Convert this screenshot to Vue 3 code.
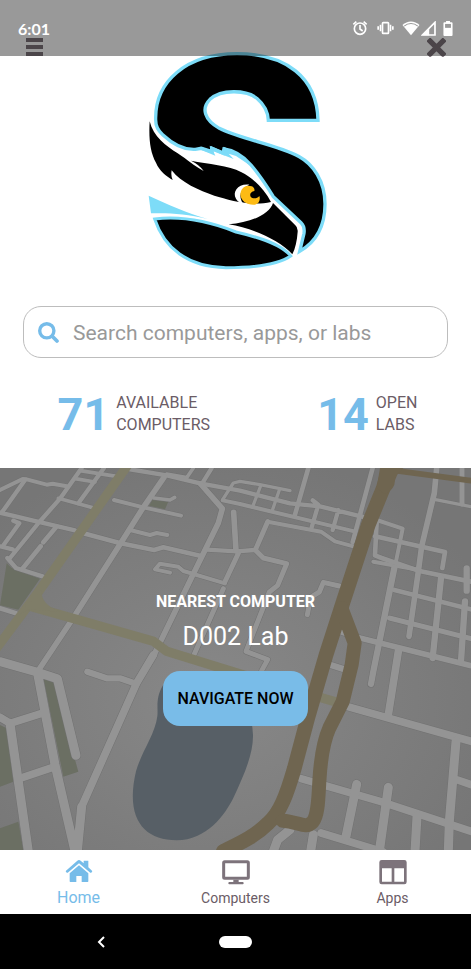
<script setup>
import { ref } from 'vue'

const query = ref('')

const stats = [
  { value: 71, label: ['Available', 'Computers'] },
  { value: 14, label: ['Open', 'Labs'] },
]

const nearest = { name: 'D002 Lab' }

// street centre lines, grouped by stroke width
const roads = [
  { w: 10, d: 'M668 95L700 45L720 40L780 50L870 68M1303 94L1413 116M783 51L758 116M838 66L818 124' },
  { w: 11, d: 'M225 32L285 42M240 8L350 25M175 91L285 121M462 90L510 96L524 88M500 18L560 29L580 0' },
  { w: 12, d: 'M0 66L68 33L80 34L140 50L158 47L200 55M342 96L430 118L543 143M390 186L450 201L470 195L502 201M668 97L720 108L1063 190M803 161L963 191L1005 220L1063 236M1130 156L1208 182L1188 280M1120 281L1255 305M510 314L465 304L480 287L535 296L550 309L675 346' },
  { w: 13, d: 'M75 36L8 130M0 134L50 146L100 158L225 187M245 0L180 92L118 162L30 270M312 0L235 106M40 158L58 166L8 235M0 235L38 244M22 270L48 300L130 326M390 4L500 22L600 46L720 68L870 106L960 115L1095 148M635 0L608 44M620 245L710 250L763 246M938 97L955 110L935 178M1015 126L998 186' },
  { w: 14, d: 'M250 196L362 226L462 246L490 238L600 263M168 178L130 223M122 235L66 304M0 421L48 436M925 0L885 140M1118 0L1058 222M1130 162L1125 262L1145 270L1255 308L1413 341M1125 205L1335 252L1327 300M1183 366L1413 424' },
  { w: 15, d: 'M715 256L675 341M670 362L580 565M803 161L766 246L790 270L860 287L833 352L808 372L738 550L803 575L785 608M1018 354L970 343L958 372L932 388L922 440M1386 0V108M1168 450L1413 512' },
  { w: 17, d: 'M492 28L430 118L362 226L222 446L112 612M701 133L708 248M1310 0L1303 75L1265 235L1255 310L1227 505M1018 490L1080 510L1413 593M602 48L667 122L655 165L578 322L460 565' },
  { w: 19, d: 'M1400 301V368M1395 400L1383 580M1183 300L1120 610L1113 648M1323 330L1298 570M990 590L1030 603M262 611L320 631L360 631L410 648' },
  { w: 23, d: 'M1195 550L1165 740M1043 716L1413 820M1373 936L1413 950M903 932L1143 1001L1413 1090M963 1095L1150 1152M0 748L30 766L125 736M60 931L165 896M460 561L410 645L245 1016' },
  { w: 27, d: 'M1368 820L1348 1060L1345 1150M1070 949L1038 1105M1165 958L1138 1150M1251 1045L1245 1150M940 1100L932 1150M870 1085L833 1115L820 1150M0 581L110 612L172 632L228 862M112 612L165 890L225 1150M30 766L85 1150M245 1016L232 1150' },
]

const tabs = [
  { id: 'home', label: 'Home' },
  { id: 'computers', label: 'Computers' },
  { id: 'apps', label: 'Apps' },
]
const active = ref('home')
</script>

<template>
  <div class="app">
    <div class="status">
      <span class="status__time">6:01</span>
      <div class="status__icons">
        <svg class="status__alarm" viewBox="0 0 48 48" fill="none" stroke="#fff" stroke-width="5">
          <circle cx="24" cy="26" r="17" />
          <path d="M24 15V27L32 33M4 13L13 5M35 5L44 13" />
        </svg>
        <svg class="status__vibrate" viewBox="0 0 48 48" fill="none" stroke="#fff" stroke-width="5">
          <rect x="15" y="8" width="18" height="32" rx="2" />
          <path d="M9 14V34M2 19V29M39 14V34M46 19V29" />
        </svg>
        <svg class="status__wifi" viewBox="0 0 50 44">
          <path d="M25 42L0 12C14 -2 36 -2 50 12Z" fill="#fff" />
          <path d="M5 15C17 5 33 5 45 15" fill="none" stroke="#999" stroke-width="3" />
        </svg>
        <svg class="status__signal" viewBox="0 0 44 44">
          <path d="M4 41H41V4Z" fill="none" stroke="#fff" stroke-width="5" />
          <path d="M3 42H24V22Z" fill="#fff" />
        </svg>
        <svg class="status__battery" viewBox="0 0 28 46">
          <path d="M8 0H20V4H25Q28 4 28 7V43Q28 46 25 46H3Q0 46 0 43V7Q0 4 3 4H8Z" fill="#fff" />
          <rect x="5" y="9" width="18" height="12" fill="#999" />
        </svg>
      </div>
    </div>

    <header class="header">
      <button class="icon-button" aria-label="Menu">
        <svg class="icon-button__menu" viewBox="0 0 19 19">
          <path d="M1 2H18M1 9H18M1 16H18" stroke="#7d737b" stroke-width="4" />
        </svg>
      </button>
      <svg class="logo" viewBox="0 0 600 696">
        <path
          d="M397 241H546C543 112 450 41 303 41C150 41 56 125 59 240C59 258 66 272 80 284C108 310 145 330 178 328L196 325L228 335L227 325L262 340L264 327C300 332 325 352 345 375C375 410 395 442 412 470L495 548Q507 560 504 580L491 634C545 603 567 555 567 492C567 422 530 372 490 350C420 312 320 300 250 265C205 240 195 205 222 178C255 148 330 148 364 176C385 194 396 215 397 241Z"
          fill="#000"
          stroke="#7ddcf8"
          stroke-width="10"
        />
        <path d="M193 320L225 331L225 318L258 332L263 320L302 338L345 378L300 348L278 341L293 357L232 334L238 347L196 330Z" fill="#7ddcf8" />
        <path
          d="M41 244C38 295 42 335 60 368C70 392 90 408 110 420Q104 406 107 391C135 428 190 452 235 467C280 480 345 500 405 486C385 448 350 412 315 396C280 376 215 372 165 362Q190 374 203 393C175 378 155 360 125 340C90 318 52 290 41 244Z"
          fill="#000"
        />
        <path
          d="M278 553C340 548 400 525 411 489L478 556Q486 562 485 575C483 603 478 625 469 643C430 600 350 565 278 553Z"
          fill="#000"
        />
        <path d="M340 434C306 430 288 456 300 476Q306 487 322 492C306 470 312 446 340 434Z" fill="#fff" />
        <path
          d="M347 439C328 432 313 446 313 465C316 485 335 496 357 494C369 491 374 478 370 468C364 476 350 478 344 470C340 462 345 455 355 453C357 447 353 441 347 439Z"
          fill="#fdbb14"
        />
        <path d="M38 467C95 493 155 520 215 537C150 521 95 518 45 520Z" fill="#7ddcf8" />
        <path
          d="M56 537C130 528 210 540 300 576C370 592 435 612 464 648C425 675 340 683 270 683C155 681 85 625 56 537Z"
          fill="#000"
          stroke="#7ddcf8"
          stroke-width="9"
        />
      </svg>
      <button class="icon-button" aria-label="Close">
        <svg class="icon-button__close" viewBox="0 0 18 18">
          <path d="M3 3L15 15M15 3L3 15" stroke="#7d737b" stroke-width="5" stroke-linecap="square" />
        </svg>
      </button>
    </header>

    <label class="search">
      <svg class="search__icon" viewBox="0 0 62 62" fill="none" stroke="#76bce9">
        <circle cx="26" cy="26" r="21" stroke-width="10" />
        <path d="M42 42L56 56" stroke-width="11" stroke-linecap="round" />
      </svg>
      <input
        v-model="query"
        class="search__input"
        type="text"
        placeholder="Search computers, apps, or labs"
        aria-label="Search computers, apps, or labs"
      />
    </label>

    <div class="stats">
      <div v-for="stat in stats" :key="stat.value" class="stat">
        <span class="stat__value">{{ stat.value }}</span>
        <span class="stat__label">
          <span v-for="line in stat.label" :key="line">{{ line }}</span>
        </span>
      </div>
    </div>

    <section class="nearest">
      <svg class="map" viewBox="0 0 1413 1146" preserveAspectRatio="xMidYMid slice">
        <defs>
          <radialGradient id="ground" cx="45%" cy="60%" r="65%">
            <stop offset="0" stop-color="#888" />
            <stop offset="1" stop-color="#767676" />
          </radialGradient>
        </defs>
        <rect width="1413" height="1146" fill="url(#ground)" />
        <g fill="#6b6f63">
          <path d="M20 286L35 300L120 332L55 425L0 412Z" />
          <path d="M460 91L505 101L495 124L447 113Z" />
          <path d="M130 631L160 641L235 911L190 926Z" />
          <path d="M0 771L20 781L40 941L0 956Z" />
          <path d="M0 1081L55 1061L70 1146H0Z" />
        </g>
        <path
          d="M490 650C465 690 475 720 472 745C465 800 425 850 408 910C375 1050 430 1117 530 1117C620 1117 675 1040 700 990C730 925 760 860 759 801Q755 700 680 650Z"
          fill="#575f66"
        />
        <g fill="none" stroke-linecap="round" stroke-linejoin="round">
          <path v-for="road in roads" :key="road.w" :d="road.d" :stroke-width="road.w + 3" stroke="#717171" />
          <path v-for="road in roads" :key="road.w" :d="road.d" :stroke-width="road.w" stroke="#949494" />
          <g stroke="#7f7d68">
            <path d="M384 -10L115 372L-10 540" stroke-width="28" />
            <path d="M90 415L215 450L460 520L500 550L650 596L760 630L1008 702" stroke-width="28" />
          </g>
          <path d="M125 365Q120 410 185 432L85 424L60 440Z" fill="#7f7d68" />
          <g stroke="#6f6550">
            <path d="M1170 -10L1150 60L1105 170L1030 400L978 561L923 751L883 901C860 980 840 1035 805 1065C765 1105 720 1125 670 1150" stroke-width="44" />
            <path d="M1024 420L1064 525L1055 590L1028 701L988 780C970 820 962 870 958 940C955 990 955 1040 938 1062C915 1085 895 1060 848 1058" stroke-width="42" />
            <path d="M1165 5L1413 38" stroke-width="17" />
          </g>
          <path d="M1140 0H1210Q1185 20 1183 50Q1175 70 1153 78L1130 60Z" fill="#6f6550" />
        </g>
      </svg>
      <h2 class="nearest__title">NEAREST COMPUTER</h2>
      <p class="nearest__name">{{ nearest.name }}</p>
      <button class="nearest__button">NAVIGATE NOW</button>
    </section>

    <nav class="tabs">
      <button
        v-for="tab in tabs"
        :key="tab.id"
        class="tab"
        :class="{ 'tab--active': active === tab.id }"
        @click="active = tab.id"
      >
        <svg v-if="tab.id === 'home'" class="tab__icon" viewBox="0 0 84 78" fill="currentColor">
          <path d="M3 35L37 5Q42 1 47 5L56 13V5H70V25L81 35Q83 38 80 40Q77 43 74 40L42 13L10 40Q7 43 4 40Q1 38 3 35Z" />
          <path d="M14 43L42 19L70 43V67Q70 69 68 69H50V51H34V69H16Q14 69 14 67Z" />
        </svg>
        <svg v-else-if="tab.id === 'computers'" class="tab__icon" viewBox="0 0 84 78">
          <rect x="5" y="8" width="74" height="50" rx="3" fill="none" stroke="currentColor" stroke-width="9" />
          <path d="M34 62H50V69H62Q65 69 65 73Q65 76 62 76H22Q19 76 19 73Q19 69 22 69H34Z" fill="currentColor" />
        </svg>
        <svg v-else class="tab__icon" viewBox="0 0 84 78">
          <path
            d="M8 3H76Q83 3 83 10V69Q83 76 76 76H8Q1 76 1 69V10Q1 3 8 3ZM9 28V68H38V28ZM46 28V68H75V28Z"
            fill="currentColor"
            fill-rule="evenodd"
          />
        </svg>
        <span class="tab__label">{{ tab.label }}</span>
      </button>
    </nav>

    <div class="system">
      <button class="system__back" aria-label="Back">
        <svg viewBox="0 0 8 12"><path d="M7 1L2 6L7 11" fill="none" stroke="#fff" stroke-width="2" /></svg>
      </button>
      <button class="system__home" aria-label="Home screen"></button>
    </div>
  </div>
</template>

<style>
body {
  margin: 0;
  background: #fff;
}
</style>

<style scoped>
.app {
  position: relative;
  display: flex;
  flex-direction: column;
  min-height: 100vh;
  font-family: Roboto, 'Liberation Sans', sans-serif;
  color: #6b5c66;
}

button {
  padding: 0;
  border: 0;
  background: none;
  font-family: inherit;
  cursor: pointer;
}

svg {
  display: block;
}

/* translucent system bar over the page */
.status {
  position: absolute;
  top: 0;
  left: 0;
  right: 0;
  z-index: 2;
  display: flex;
  justify-content: space-between;
  align-items: center;
  box-sizing: border-box;
  height: 56px;
  padding: 0 18px;
  background: rgba(0, 0, 0, 0.4);
  color: #fff;
}

.status__time {
  font-family: Lato, sans-serif;
  font-size: 16px;
  font-weight: bold;
}

.status__icons {
  display: flex;
  align-items: center;
}

.status__alarm {
  width: 16px;
  height: 16px;
  margin-right: 9px;
}

.status__vibrate {
  width: 17px;
  height: 16px;
  margin-right: 8px;
}

.status__wifi {
  width: 18px;
  height: 15px;
  margin-right: 1px;
}

.status__signal {
  width: 15px;
  height: 15px;
  margin-right: 7px;
}

.status__battery {
  width: 10px;
  height: 15px;
}

.header {
  display: flex;
  justify-content: space-between;
  align-items: flex-start;
  padding: 38px 25px 0;
}

.logo {
  width: 200px;
  height: 232px;
  margin-top: 2px;
}

.icon-button__menu,
.icon-button__close {
  width: 19px;
  height: 19px;
}

.search {
  display: flex;
  align-items: center;
  gap: 14px;
  box-sizing: border-box;
  height: 52px;
  margin: 34px 23px 0;
  padding: 0 14px;
  border: 1px solid #bdbdbd;
  border-radius: 18px;
}

.search__icon {
  flex: none;
  width: 21px;
  height: 21px;
}

.search__input {
  flex: 1;
  min-width: 0;
  padding: 1px 0 0;
  border: 0;
  outline: 0;
  background: none;
  font-family: inherit;
  font-size: 21px;
  color: #555;
}

.search__input::placeholder {
  color: #999;
  opacity: 1;
}

.stats {
  display: flex;
  justify-content: space-around;
  padding: 34px 0 32px 4px;
}

.stat {
  display: flex;
  align-items: center;
  gap: 7px;
}

.stat__value {
  padding-top: 2px;
  font-size: 45px;
  line-height: 42px;
  font-weight: bold;
  color: #76bce9;
}

.stat__label {
  display: flex;
  flex-direction: column;
  font-size: 16px;
  line-height: 22px;
  text-transform: uppercase;
}

.nearest {
  position: relative;
  flex: 1;
  display: flex;
  flex-direction: column;
  align-items: center;
  justify-content: center;
  padding: 124px 0;
  background: #808080;
  color: #fff;
  overflow: hidden;
}

.map {
  position: absolute;
  inset: 0;
  width: 100%;
  height: 100%;
}

.nearest__title,
.nearest__name,
.nearest__button {
  position: relative;
  margin: 0;
}

.nearest__title {
  font-size: 16px;
  line-height: 20px;
  font-weight: bold;
}

.nearest__name {
  margin-top: 8px;
  font-size: 25px;
  line-height: 34px;
  font-weight: 400;
}

.nearest__button {
  margin-top: 17px;
  padding: 0 14px;
  height: 55px;
  border-radius: 17px;
  background: #79bce8;
  font-size: 16px;
  font-weight: 500;
  color: #000;
}

.tabs {
  display: grid;
  grid-template-columns: repeat(3, 1fr);
  height: 64px;
  background: #fff;
}

.tab {
  display: flex;
  flex-direction: column;
  align-items: center;
  padding-top: 9px;
  color: #7d737b;
}

.tab__icon {
  width: 28px;
  height: 26px;
}

.tab__label {
  margin-top: 3px;
  font-size: 14px;
  line-height: 20px;
  color: #6b5c66;
}

.tab--active,
.tab--active .tab__label {
  color: #76bce9;
}

.tab--active .tab__label {
  font-size: 16px;
}

.system {
  display: grid;
  grid-template-columns: 1fr auto 1fr;
  align-items: center;
  height: 55px;
  background: #000;
}

.system__back {
  justify-self: center;
  width: 8px;
  height: 12px;
  margin-right: 17px;
}

.system__home {
  width: 33px;
  height: 12px;
  border-radius: 6px;
  background: #fff;
}
</style>
